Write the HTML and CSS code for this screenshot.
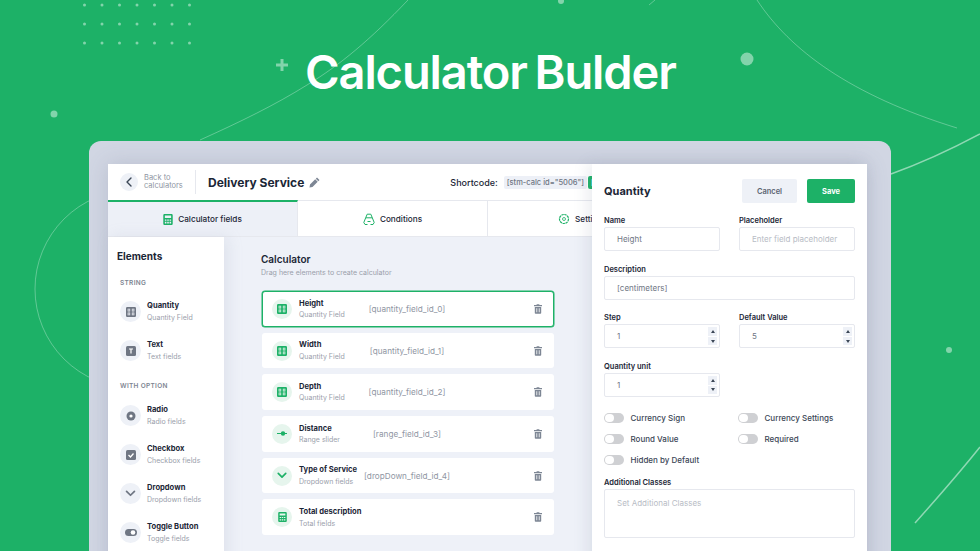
FILE: index.html
```html
<!DOCTYPE html>
<html lang="en">
<head>
<meta charset="UTF-8">
<title>Calculator Bulder</title>
<link rel="stylesheet" href="styles.css">
</head>
<body>

<svg class="decor" width="980" height="551" viewBox="0 0 980 551" aria-hidden="true">
    <g fill="none" stroke="#fff">
        <path class="line" d="M408 0C370 40 340 65 307 85C275 105 240 122 200 140"/>
        <path class="line" d="M757 0C790 50 850 95 957 128"/>
        <path class="line" d="M649 5L655 0"/>
        <path class="line-strong" d="M980 134C950 150 925 162 891 174"/>
        <path class="line-strong" d="M980 447C960 472 940 495 915 523"/>
        <circle class="line" cx="134" cy="289" r="99"/>
    </g>
    <g fill="#fff" opacity=".45">
        <circle cx="54" cy="114" r="3.5"/>
        <circle cx="747" cy="59" r="6.5"/>
        <circle cx="949" cy="350" r="3"/>
        <circle cx="561" cy="1" r="3"/>
        <path d="M280.500 59h3v4.500h4.500v3h-4.500v4.500h-3v-4.500h-4.500v-3h4.500z"/>
    </g>
    <g fill="#fff" opacity=".45">
        <circle cx="84.500" cy="5" r="1.500"/><circle cx="102" cy="5" r="1.500"/><circle cx="119.500" cy="5" r="1.500"/><circle cx="137" cy="5" r="1.500"/><circle cx="154.500" cy="5" r="1.500"/><circle cx="172" cy="5" r="1.500"/><circle cx="189.500" cy="5" r="1.500"/>
        <circle cx="84.500" cy="24" r="1.500"/><circle cx="102" cy="24" r="1.500"/><circle cx="119.500" cy="24" r="1.500"/><circle cx="137" cy="24" r="1.500"/><circle cx="154.500" cy="24" r="1.500"/><circle cx="172" cy="24" r="1.500"/><circle cx="189.500" cy="24" r="1.500"/>
        <circle cx="84.500" cy="43" r="1.500"/><circle cx="102" cy="43" r="1.500"/><circle cx="119.500" cy="43" r="1.500"/><circle cx="137" cy="43" r="1.500"/><circle cx="154.500" cy="43" r="1.500"/><circle cx="172" cy="43" r="1.500"/><circle cx="189.500" cy="43" r="1.500"/>
    </g>
</svg>

<svg width="0" height="0" class="defs" aria-hidden="true">
    <symbol id="i-qty" viewBox="0 0 12 12">
        <path fill="currentColor" fill-rule="evenodd" d="M1.500 0h9A1.500 1.500 0 0 1 12 1.500v9a1.500 1.500 0 0 1-1.500 1.500h-9A1.500 1.500 0 0 1 0 10.500v-9A1.500 1.500 0 0 1 1.500 0zM2 2v3.500h3V2zM7 2v3.500h3V2zM2 6.500V10h3V6.500zM7 6.500V10h3V6.500z"/>
        <path fill="none" stroke="currentColor" stroke-width=".8" d="M3.500 2.500v2.500M8.500 2.500v2.500M3.500 7v2.500M8.500 7v2.500"/>
    </symbol>
    <symbol id="i-calc" viewBox="0 0 12 14">
        <path fill="currentColor" fill-rule="evenodd" d="M1.500 0h9A1.500 1.500 0 0 1 12 1.500v11a1.500 1.500 0 0 1-1.500 1.500h-9A1.500 1.500 0 0 1 0 12.500v-11A1.500 1.500 0 0 1 1.500 0zM2 2v3h8V2zM2 7v1.500h2V7zM5 7v1.500h2V7zM8 7v1.500h2V7zM2 10v2h2v-2zM5 10v2h2v-2zM8 10v2h2v-2z"/>
    </symbol>
    <symbol id="i-trash" viewBox="0 0 10 12">
        <path fill="currentColor" fill-rule="evenodd" d="M3.500 0h3l.5 1h3v1.500H0V1h3zM1 3.500h8V11a1 1 0 0 1-1 1H2a1 1 0 0 1-1-1zM3 5v5h1V5zM6 5v5h1V5z"/>
    </symbol>
    <symbol id="i-chev" viewBox="0 0 12 8">
        <path fill="none" stroke="currentColor" stroke-width="2" stroke-linecap="round" stroke-linejoin="round" d="M1.500 1.500L6 6l4.500-4.500"/>
    </symbol>
</svg>

<h1 class="headline">Calculator Bulder</h1>

<div class="frame">
    <div class="app">
        <header class="topbar">
            <div class="back">
                <span class="back-btn">
                    <svg width="6" height="10" viewBox="0 0 6 10"><path fill="none" stroke="#3b4656" stroke-width="1.400" stroke-linecap="round" stroke-linejoin="round" d="M5 1L1 5l4 4"/></svg>
                </span>
                <span class="back-text">Back to<br>calculators</span>
            </div>
            <div class="calc-name">Delivery Service</div>
            <svg class="pencil" width="11" height="11" viewBox="0 0 11 11"><path fill="#7d8694" d="M8 .5l2.500 2.500-1.200 1.200-2.500-2.500zM6.200 2.300l2.500 2.500L3.500 10 .5 10.500 1 7.500z"/></svg>
            <div class="shortcode">
                <span>Shortcode:</span>
                <code class="chip">[stm-calc id="5006"]</code>
                <code class="chip chip-green">[</code>
            </div>
        </header>

        <nav class="tabs">
            <div class="tab tab-active">
                <svg class="tab-icon" width="10" height="11"><use href="#i-calc"/></svg>
                Calculator fields
            </div>
            <div class="tab">
                <svg class="tab-icon" width="12" height="12" viewBox="0 0 12 12"><path fill="none" stroke="currentColor" d="M4.200 1.200h3.600l1.500 3.600H2.700zM2.700 4.800L.8 9.500l1.200 2h2.500M9.300 4.800l1.900 4.700-1.200 2H7.500M4.500 8.500h3"/></svg>
                Conditions
            </div>
            <div class="tab">
                <svg class="tab-icon" width="12" height="12" viewBox="0 0 12 12"><circle cx="6" cy="6" r="4.500" fill="none" stroke="currentColor" stroke-width="1.200" stroke-dasharray="2.400 .6"/><circle cx="6" cy="6" r="1.500" fill="none" stroke="currentColor" stroke-width=".8"/></svg>
                Settings
            </div>
        </nav>

        <div class="workspace">
            <aside class="sidebar">
                <h2 class="side-title">Elements</h2>
                <div class="side-group">String</div>
                <div class="el">
                    <span class="el-icon"><svg width="10" height="10"><use href="#i-qty"/></svg></span>
                    <span class="el-text"><b>Quantity</b><small>Quantity Field</small></span>
                </div>
                <div class="el">
                    <span class="el-icon"><svg width="10" height="10" viewBox="0 0 10 10"><rect width="10" height="10" rx="1.500" fill="#6f7683"/><path fill="none" stroke="#fff" stroke-width="1.200" d="M3 3h4M5 3v4.500"/></svg></span>
                    <span class="el-text"><b>Text</b><small>Text fields</small></span>
                </div>
                <div class="side-group side-group-option">With option</div>
                <div class="el">
                    <span class="el-icon"><svg width="10" height="10" viewBox="0 0 10 10"><circle cx="5" cy="5" r="4.500" fill="#6f7683"/><circle cx="5" cy="5" r="1.600" fill="#fff"/></svg></span>
                    <span class="el-text"><b>Radio</b><small>Radio fields</small></span>
                </div>
                <div class="el">
                    <span class="el-icon"><svg width="10" height="10" viewBox="0 0 10 10"><rect width="10" height="10" rx="1.500" fill="#6f7683"/><path fill="none" stroke="#fff" stroke-width="1.300" d="M2.500 5l2 2 3-3.500"/></svg></span>
                    <span class="el-text"><b>Checkbox</b><small>Checkbox fields</small></span>
                </div>
                <div class="el">
                    <span class="el-icon"><svg width="11" height="7"><use href="#i-chev"/></svg></span>
                    <span class="el-text"><b>Dropdown</b><small>Dropdown fields</small></span>
                </div>
                <div class="el">
                    <span class="el-icon"><svg width="12" height="7" viewBox="0 0 12 7"><rect width="12" height="7" rx="3.500" fill="#6f7683"/><circle cx="8" cy="3.500" r="2.300" fill="#fff"/></svg></span>
                    <span class="el-text"><b>Toggle Button</b><small>Toggle fields</small></span>
                </div>
            </aside>

            <main class="canvas">
                <h2 class="canvas-title">Calculator</h2>
                <p class="canvas-hint">Drag here elements to create calculator</p>
                <div class="rows">
                    <div class="row row-selected">
                        <div class="row-main">
                            <span class="row-icon"><svg width="10" height="10"><use href="#i-qty"/></svg></span>
                            <span class="el-text"><b>Height</b><small>Quantity Field</small></span>
                        </div>
                        <span class="row-code">[quantity_field_id_0]</span>
                        <svg class="trash" width="8" height="10"><use href="#i-trash"/></svg>
                    </div>
                    <div class="row">
                        <div class="row-main">
                            <span class="row-icon"><svg width="10" height="10"><use href="#i-qty"/></svg></span>
                            <span class="el-text"><b>Width</b><small>Quantity Field</small></span>
                        </div>
                        <span class="row-code">[quantity_field_id_1]</span>
                        <svg class="trash" width="8" height="10"><use href="#i-trash"/></svg>
                    </div>
                    <div class="row">
                        <div class="row-main">
                            <span class="row-icon"><svg width="10" height="10"><use href="#i-qty"/></svg></span>
                            <span class="el-text"><b>Depth</b><small>Quantity Field</small></span>
                        </div>
                        <span class="row-code">[quantity_field_id_2]</span>
                        <svg class="trash" width="8" height="10"><use href="#i-trash"/></svg>
                    </div>
                    <div class="row">
                        <div class="row-main">
                            <span class="row-icon"><svg width="10" height="5" viewBox="0 0 10 5"><path fill="currentColor" d="M0 2h10v1H0z"/><circle cx="6" cy="2.500" r="2.200" fill="currentColor"/></svg></span>
                            <span class="el-text"><b>Distance</b><small>Range slider</small></span>
                        </div>
                        <span class="row-code">[range_field_id_3]</span>
                        <svg class="trash" width="8" height="10"><use href="#i-trash"/></svg>
                    </div>
                    <div class="row">
                        <div class="row-main">
                            <span class="row-icon"><svg width="10" height="7"><use href="#i-chev"/></svg></span>
                            <span class="el-text"><b>Type of Service</b><small>Dropdown fields</small></span>
                        </div>
                        <span class="row-code">[dropDown_field_id_4]</span>
                        <svg class="trash" width="8" height="10"><use href="#i-trash"/></svg>
                    </div>
                    <div class="row">
                        <div class="row-main">
                            <span class="row-icon"><svg width="9" height="10"><use href="#i-calc"/></svg></span>
                            <span class="el-text"><b>Total description</b><small>Total fields</small></span>
                        </div>
                        <span class="row-code"></span>
                        <svg class="trash" width="8" height="10"><use href="#i-trash"/></svg>
                    </div>
                </div>
            </main>
        </div>

        <section class="panel">
            <div class="panel-head">
                <h2 class="panel-title">Quantity</h2>
                <button class="btn btn-cancel">Cancel</button>
                <button class="btn btn-save">Save</button>
            </div>
            <div class="form">
                <div class="field">
                    <label>Name</label>
                    <div class="input">Height</div>
                </div>
                <div class="field">
                    <label>Placeholder</label>
                    <div class="input input-empty">Enter field placeholder</div>
                </div>
                <div class="field field-wide">
                    <label>Description</label>
                    <div class="input">[centimeters]</div>
                </div>
                <div class="field">
                    <label>Step</label>
                    <div class="input">1<span class="stepper"><i class="up"></i><i class="down"></i></span></div>
                </div>
                <div class="field">
                    <label>Default Value</label>
                    <div class="input">5<span class="stepper"><i class="up"></i><i class="down"></i></span></div>
                </div>
                <div class="field">
                    <label>Quantity unit</label>
                    <div class="input">1<span class="stepper"><i class="up"></i><i class="down"></i></span></div>
                </div>
            </div>
            <div class="switches">
                <div class="switch"><span class="toggle"></span>Currency Sign</div>
                <div class="switch"><span class="toggle"></span>Currency Settings</div>
                <div class="switch"><span class="toggle"></span>Round Value</div>
                <div class="switch"><span class="toggle"></span>Required</div>
                <div class="switch"><span class="toggle"></span>Hidden by Default</div>
            </div>
            <div class="field field-classes">
                <label>Additional Classes</label>
                <div class="textarea">Set Additional Classes</div>
            </div>
        </section>
    </div>
</div>

</body>
</html>
```
FILE: styles.css
```css
html, body {
    height: 100%;
    margin: 0;
    padding: 0;
}
body {
    font-family: Inter, "Liberation Sans", sans-serif;
    background: #1db167;
    color: #1b2636;
    position: relative;
    overflow: hidden;
}
h1, h2, p {
    margin: 0;
}

/* Background decoration */
.decor {
    position: absolute;
    top: 0;
    left: 0;
}
.defs {
    position: absolute;
}
.line {
    stroke-opacity: .3;
    stroke-width: 1;
}
.line-strong {
    stroke-opacity: .5;
    stroke-width: 1.500;
}

.headline {
    position: relative;
    height: 141px;
    padding-left: 305px;
    box-sizing: border-box;
    font-size: 47px;
    font-weight: 600;
    line-height: 143px;
    letter-spacing: -1.100px;
    word-spacing: -3px;
    color: #fff;
    white-space: nowrap;
}

/* Frame and app */
.frame {
    position: relative;
    width: 802px;
    height: 430px;
    margin-left: 89px;
    padding: 23px 24px 0 19px;
    box-sizing: border-box;
    background: #d1d6e3;
    border-radius: 12px 12px 0 0;
    overflow: hidden;
}
.app {
    position: relative;
    height: 420px;
    background: #fff;
    box-shadow: 0 0 20px rgba(90, 100, 125, .2);
}

.topbar {
    display: flex;
    align-items: center;
    height: 36px;
    padding-left: 12px;
}
.back {
    display: flex;
    align-items: center;
    gap: 6px;
    width: 75px;
    height: 24px;
    border-right: 1px solid #e6e8ee;
}
.back-btn {
    display: flex;
    align-items: center;
    justify-content: center;
    width: 18px;
    height: 18px;
    border-radius: 50%;
    background: #eef1f7;
}
.back-text {
    font-size: 7.500px;
    line-height: 8.500px;
    color: #8f96a3;
}
.calc-name {
    margin-left: 12px;
    font-size: 12px;
    font-weight: 700;
}
.pencil {
    margin-left: 5px;
}
.shortcode {
    display: flex;
    align-items: center;
    margin-left: 130px;
    font-size: 9px;
    font-weight: 500;
    white-space: nowrap;
}
.chip {
    margin-left: 6px;
    padding: 2px 3px;
    border-radius: 2px;
    background: #edf0f7;
    color: #6f7683;
    font-family: Inter, "Liberation Sans", sans-serif;
    font-size: 7.500px;
}
.chip-green {
    margin-left: 1px;
    background: #1db167;
    color: #fff;
}

.tabs {
    display: grid;
    grid-template-columns: 190px 190px 190px;
    height: 37px;
    border-bottom: 1px solid #e6e8ee;
    box-sizing: border-box;
}
.tab {
    display: flex;
    align-items: center;
    justify-content: center;
    gap: 5px;
    border-top: 1px solid #e6e8ee;
    border-right: 1px solid #e6e8ee;
    font-size: 8.200px;
    font-weight: 500;
}
.tab-active {
    border-top: 2px solid #1db167;
    background: #edf0f7;
}
.tab-icon {
    color: #1db167;
}

/* Elements sidebar */
.workspace {
    display: flex;
    height: 347px;
}
.sidebar {
    width: 116px;
    flex-shrink: 0;
    padding: 13px 0 0 9px;
    box-sizing: border-box;
    background: #fff;
    box-shadow: 4px 0 14px rgba(150, 160, 185, .18);
    position: relative;
}
.side-title {
    font-size: 10px;
    font-weight: 700;
    line-height: 12px;
}
.side-group {
    margin: 17px 0 5px 3px;
    font-size: 6.500px;
    font-weight: 600;
    line-height: 8px;
    letter-spacing: .3px;
    text-transform: uppercase;
    color: #7d8491;
}
.side-group-option {
    margin-top: 11.500px;
    margin-bottom: 6.500px;
}
.el {
    display: flex;
    align-items: center;
    gap: 6px;
    height: 39px;
    padding-left: 3px;
}
.el-icon {
    display: flex;
    align-items: center;
    justify-content: center;
    width: 21px;
    height: 21px;
    border-radius: 50%;
    background: #eef1f7;
    color: #6f7683;
    flex-shrink: 0;
}
.el-text {
    display: flex;
    flex-direction: column;
    gap: 1.500px;
    white-space: nowrap;
}
.el-text b {
    font-size: 7.600px;
    font-weight: 700;
    line-height: 10px;
}
.el-text small {
    font-size: 7px;
    line-height: 9px;
    color: #9aa0ab;
}

/* Calculator canvas */
.canvas {
    flex: 1;
    padding: 16px 0 0 37px;
    background: #eef1f8;
}
.canvas-title {
    font-size: 10px;
    font-weight: 600;
    line-height: 13px;
}
.canvas-hint {
    margin-top: 2px;
    font-size: 7px;
    line-height: 10px;
    color: #9aa0ab;
}
.rows {
    display: flex;
    flex-direction: column;
    gap: 6px;
    width: 292px;
    margin: 13px 0 0 1px;
}
.row {
    display: grid;
    grid-template-columns: 1fr auto 1fr;
    align-items: center;
    height: 35.700px;
    padding: 0 12px 0 10px;
    box-sizing: border-box;
    border-radius: 3px;
    background: #fff;
}
.row-selected {
    border: 1px solid #1db167;
    box-shadow: 0 0 0 .5px #1db167;
    padding: 0 11px 0 9px;
}
.row-main {
    display: flex;
    align-items: center;
    gap: 7px;
}
.row-icon {
    display: flex;
    align-items: center;
    justify-content: center;
    width: 20px;
    height: 20px;
    border-radius: 50%;
    background: #e6f5ed;
    color: #1db167;
    flex-shrink: 0;
}
.row-code {
    padding: 0 5px;
    font-size: 8.200px;
    color: #8f96a3;
    white-space: nowrap;
}
.trash {
    justify-self: end;
    color: #7d8694;
}

/* Field settings panel */
.panel {
    position: absolute;
    top: 0;
    right: 0;
    width: 275px;
    height: 420px;
    padding: 15px 12px 0;
    box-sizing: border-box;
    background: #fff;
    box-shadow: -4px 0 14px rgba(120, 130, 155, .16);
}
.panel-head {
    display: flex;
    align-items: center;
    gap: 10px;
    height: 24px;
}
.panel-title {
    flex: 1;
    font-size: 11px;
    font-weight: 700;
}
.btn {
    height: 24px;
    border: 0;
    border-radius: 2px;
    font-family: inherit;
    font-size: 7.500px;
    font-weight: 600;
}
.btn-cancel {
    width: 55px;
    background: #eef1f7;
    color: #5b6472;
}
.btn-save {
    width: 48px;
    background: #1db167;
    color: #fff;
    font-weight: 700;
}
.form {
    display: grid;
    grid-template-columns: 116px 116px;
    column-gap: 19px;
    row-gap: 13.700px;
    margin-top: 13px;
}
.field-wide {
    grid-column: span 2;
}
.field label {
    display: block;
    margin-bottom: 1px;
    font-size: 7.500px;
    font-weight: 600;
    line-height: 10px;
}
.input {
    position: relative;
    display: flex;
    align-items: center;
    height: 24px;
    padding-left: 12px;
    box-sizing: border-box;
    border: 1px solid #e6e8ee;
    border-radius: 2px;
    font-size: 8px;
    color: #6f7683;
}
.input-empty {
    color: #b8bcc5;
}
.stepper {
    position: absolute;
    top: 2px;
    right: 2px;
    display: flex;
    flex-direction: column;
    gap: 1px;
}
.stepper i {
    display: flex;
    align-items: center;
    justify-content: center;
    width: 9px;
    height: 8.500px;
    background: #eef1f7;
}
.stepper i::before {
    content: "";
    border-left: 2.500px solid transparent;
    border-right: 2.500px solid transparent;
}
.stepper .up::before {
    border-bottom: 3px solid #3b4656;
}
.stepper .down::before {
    border-top: 3px solid #3b4656;
}
.switches {
    display: grid;
    grid-template-columns: 134px 116px;
    row-gap: 10.500px;
    margin-top: 15.500px;
}
.switch {
    display: flex;
    align-items: center;
    gap: 7px;
    height: 10.500px;
    font-size: 8px;
    font-weight: 500;
    color: #3b4656;
    white-space: nowrap;
}
.toggle {
    position: relative;
    width: 19.500px;
    height: 10.500px;
    border-radius: 6px;
    background: #cfd0d3;
}
.toggle::before {
    content: "";
    position: absolute;
    top: 1px;
    left: 1px;
    width: 8.500px;
    height: 8.500px;
    border-radius: 50%;
    background: #fff;
}
.field-classes {
    margin-top: 13px;
}
.textarea {
    height: 49px;
    padding: 8px 12px;
    box-sizing: border-box;
    border: 1px solid #e6e8ee;
    border-radius: 2px;
    font-size: 8px;
    color: #b8bcc5;
}
```
